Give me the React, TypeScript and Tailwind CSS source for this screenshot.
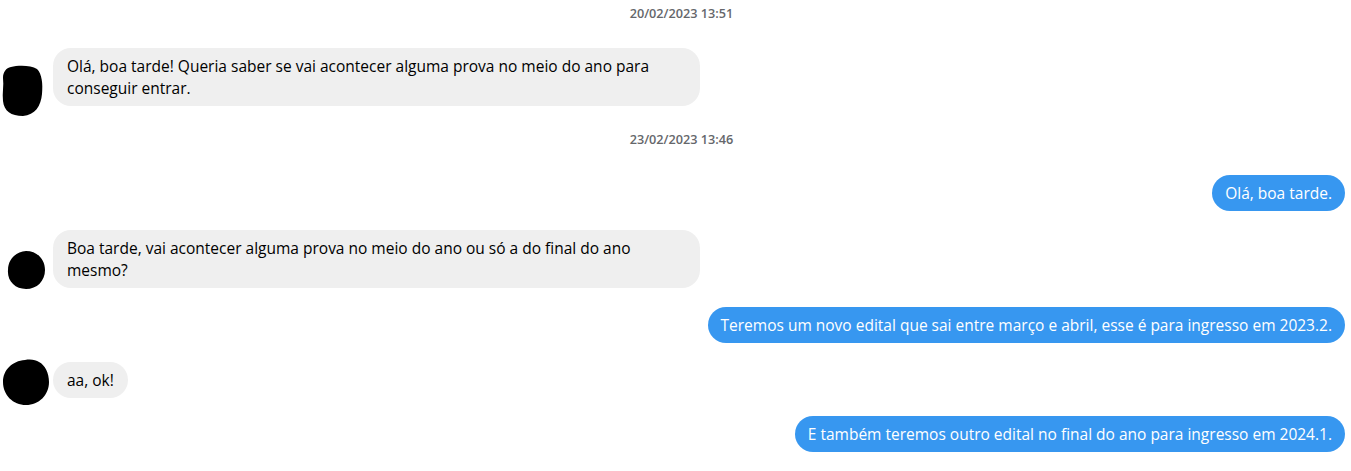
const font = { fontFamily: '"Open Sans", "Noto Sans", sans-serif' }

type Msg =
  | { kind: 'time'; text: string; gap: string }
  | { kind: 'in'; text: string; gap: string; avatar: number }
  | { kind: 'out'; text: string; gap: string }

const messages: Msg[] = [
  { kind: 'time', text: '20/02/2023 13:51', gap: 'mt-[5px]' },
  {
    kind: 'in',
    avatar: 0,
    gap: 'mt-[27px]',
    text: 'Olá, boa tarde! Queria saber se vai acontecer alguma prova no meio do ano para conseguir entrar.',
  },
  { kind: 'time', text: '23/02/2023 13:46', gap: 'mt-[25px]' },
  { kind: 'out', text: 'Olá, boa tarde.', gap: 'mt-[28px]' },
  {
    kind: 'in',
    avatar: 1,
    gap: 'mt-[19px]',
    text: 'Boa tarde, vai acontecer alguma prova no meio do ano ou só a do final do ano mesmo?',
  },
  {
    kind: 'out',
    gap: 'mt-[19px]',
    text: 'Teremos um novo edital que sai entre março e abril, esse é para ingresso em 2023.2.',
  },
  { kind: 'in', avatar: 2, gap: 'mt-[19px]', text: 'aa, ok!' },
  {
    kind: 'out',
    gap: 'mt-[18px]',
    text: 'E também teremos outro edital no final do ano para ingresso em 2024.1.',
  },
]

// scribbled-over profile pictures
function Avatar({ n }: { n: number }) {
  if (n === 0) {
    return (
      <svg width="41" height="51" viewBox="0 0 41 51" className="ml-[2px] mt-[17px] mb-[-10px] shrink-0">
        <path
          d="M9 2 C16 0 29 0 35 4 C40 9 41 19 40 29 C39 41 33 50 21 51 C9 51 2 46 1 36 C0 28 2 21 1 13 C1 7 4 3 9 2 Z"
          fill="#000"
        />
      </svg>
    )
  }
  if (n === 1) {
    return (
      <svg width="38" height="38" viewBox="0 0 38 38" className="ml-[7px] mt-[21px] mb-[-1px] shrink-0">
        <path
          d="M19 0 C30 0 38 8 38 19 C38 30 30 38 19 38 C8 38 0 30 1 19 C1 8 9 1 19 0 Z"
          fill="#000"
        />
      </svg>
    )
  }
  return (
    <svg width="46" height="46" viewBox="0 0 46 46" className="ml-[3px] mt-[-3px] mb-[-7px] shrink-0">
      <path
        d="M22 1 C28 0 33 1 36 3 C42 6 46 14 46 23 C46 36 36 46 23 46 C10 46 0 36 0 23 C0 11 9 2 22 1 Z"
        fill="#000"
      />
    </svg>
  )
}

export default function App() {
  return (
    <div className="w-full h-[471px] bg-white overflow-hidden pr-[6px] flex flex-col" style={font}>
      {messages.map((m, i) => {
        if (m.kind === 'time') {
          return (
            <div key={i} className={`${m.gap} pl-[18px] text-center text-[12.7px] leading-4 font-semibold text-[#65676b]`}>
              {m.text}
            </div>
          )
        }
        if (m.kind === 'out') {
          return (
            <div key={i} className={`${m.gap} flex justify-end`}>
              <div className="bg-[#3797f0] text-white text-[15.5px] leading-[22px] px-[13px] py-[7px] rounded-[18px]">
                {m.text}
              </div>
            </div>
          )
        }
        return (
          <div key={i} className={`${m.gap} flex items-start`}>
            <div className="w-[53px] shrink-0 flex items-start">
              <Avatar n={m.avatar} />
            </div>
            <div className="max-w-[647px] bg-[#efefef] text-black text-[15.5px] leading-[22px] px-[14px] py-[7px] rounded-[18px]">
              {m.text}
            </div>
          </div>
        )
      })}
    </div>
  )
}
